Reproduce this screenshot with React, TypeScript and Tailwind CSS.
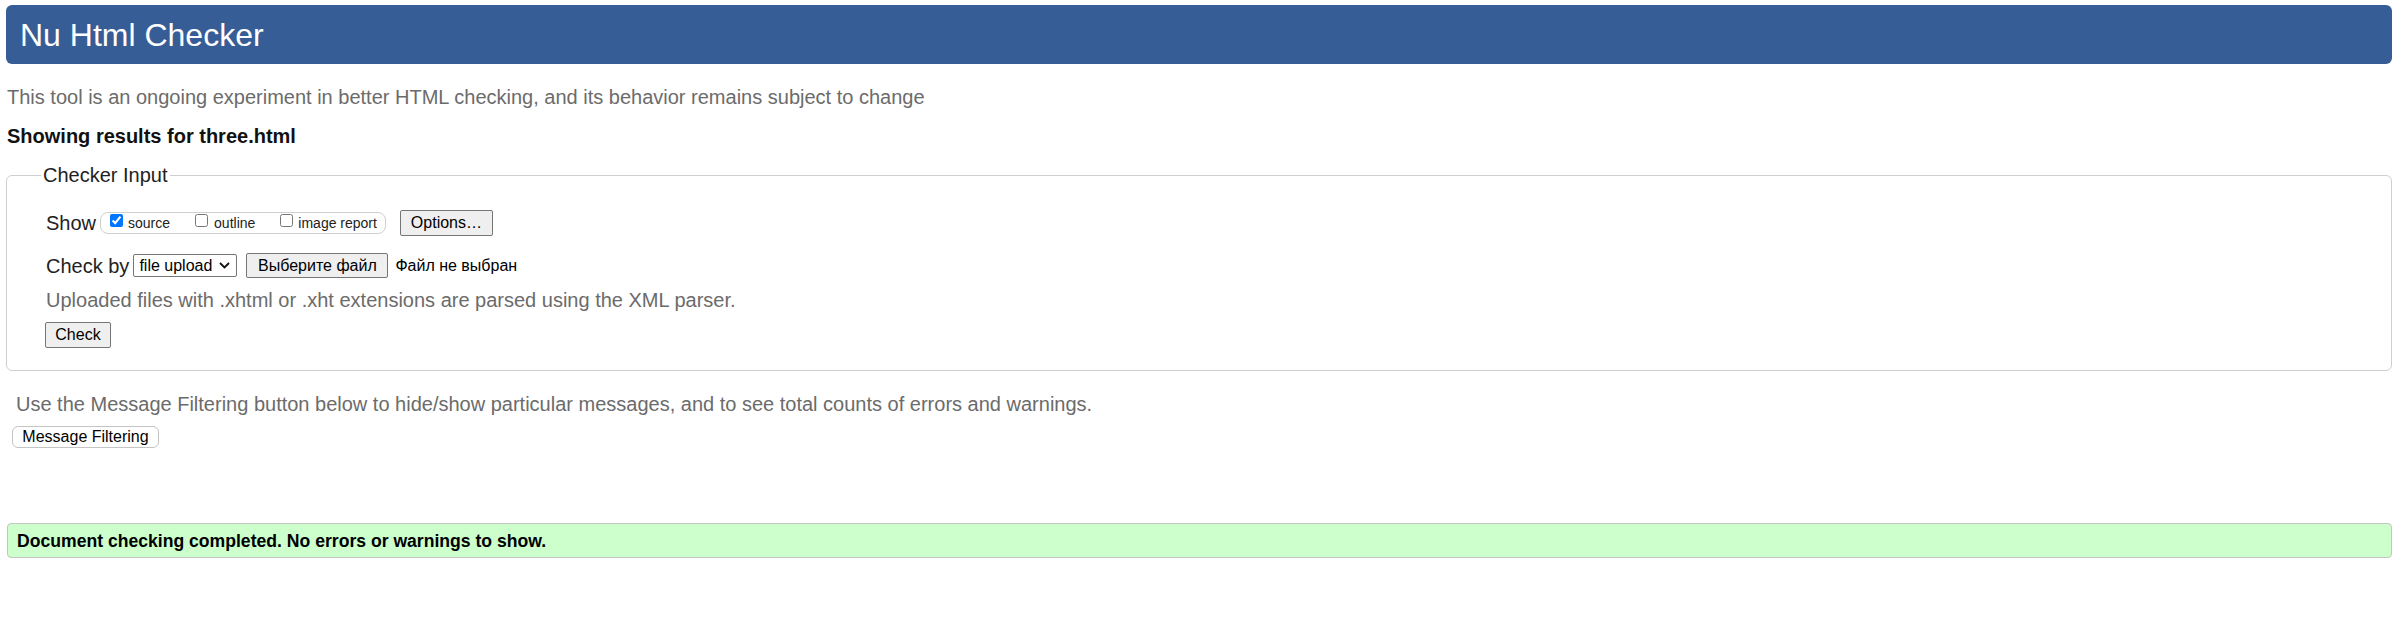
export default function App() {
  return (
    <div className="min-h-screen bg-white pl-[6px] pr-[10px] pt-[5px] font-['Liberation_Sans',Arial,sans-serif] text-[#222]">
      {/* Title bar */}
      <div className="flex h-[59px] items-center rounded-[6px] bg-[#365d96] pl-[14px] text-[32px] leading-[36px] text-white">
        Nu Html Checker
      </div>

      <p className="mt-[21px] pl-[1px] text-[20px] leading-[24px] text-[#6b6b6b]">
        This tool is an ongoing experiment in better HTML checking, and its behavior remains subject to change
      </p>

      <p className="mt-[15px] pl-[1px] text-[20px] font-bold leading-[24px] text-[#111]">
        Showing results for three.html
      </p>

      {/* Checker input */}
      <fieldset className="mt-[15px] rounded-[6px] border border-[#cfcfcf] pl-[34px] pb-[22px]">
        <legend className="px-[2px] text-[20px] leading-[24px] text-[#222]">Checker Input</legend>
        <div className="pl-[5px] pt-[23px]">
          <div className="flex h-[26px] items-center">
            <span className="text-[20px] leading-[24px]">Show</span>
            <div className="ml-[4px] flex h-[22px] items-center rounded-[8px] border border-[#cfcfcf] pl-[9px] pr-[8px]">
              <label className="flex items-center">
                <input type="checkbox" defaultChecked className="mb-[6px] h-[13px] w-[13px]" />
                <span className="ml-[5px] text-[14px] leading-[16px] text-[#222]">source</span>
              </label>
              <label className="ml-[25px] flex items-center">
                <input type="checkbox" className="mb-[6px] h-[13px] w-[13px]" />
                <span className="ml-[6px] text-[14px] leading-[16px] text-[#222]">outline</span>
              </label>
              <label className="ml-[25px] flex items-center">
                <input type="checkbox" className="mb-[6px] h-[13px] w-[13px]" />
                <span className="ml-[5px] text-[14px] leading-[16px] text-[#222]">image report</span>
              </label>
            </div>
            <button className="ml-[14px] flex h-[26px] w-[93px] items-center justify-center rounded-[2px] border border-[#767676] bg-[#efefef] text-[16px] leading-[18px] text-black">
              Options…
            </button>
          </div>

          <div className="mt-[17px] flex h-[25px] items-center">
            <span className="text-[20px] leading-[24px]">Check by</span>
            <div className="ml-[4px] flex h-[23px] w-[104px] items-center rounded-[2px] border border-[#767676] bg-white pl-[5px] pr-[6px] text-[16px] leading-[18px] text-black">
              <span>file upload</span>
              <svg className="ml-auto" width="11" height="7" viewBox="0 0 11 7" fill="none">
                <path d="M1 1l4.5 4.5L10 1" stroke="#111" strokeWidth="1.8" />
              </svg>
            </div>
            <button className="ml-[9px] flex h-[25px] w-[142px] items-center justify-center rounded-[2px] border border-[#767676] bg-[#efefef] text-[16px] leading-[18px] text-black">
              Выберите файл
            </button>
            <span className="ml-[7px] text-[16px] leading-[18px] text-black">Файл не выбран</span>
          </div>

          <p className="mt-[10px] text-[20px] leading-[24px] text-[#6b6b6b]">
            Uploaded files with .xhtml or .xht extensions are parsed using the XML parser.
          </p>

          <button className="-ml-[1px] mt-[10px] flex h-[26px] w-[66px] items-center justify-center rounded-[2px] border border-[#767676] bg-[#efefef] text-[16px] leading-[18px] text-black">
            Check
          </button>
        </div>
      </fieldset>

      <p className="mt-[21px] pl-[10px] text-[20px] leading-[24px] text-[#6b6b6b]">
        Use the Message Filtering button below to hide/show particular messages, and to see total counts of errors and warnings.
      </p>

      <button className="ml-[6px] mt-[10px] flex h-[22px] w-[147px] items-center justify-center rounded-[6px] border border-[#c4c4c4] bg-white text-[16px] leading-[18px] text-black">
        Message Filtering
      </button>

      {/* Result */}
      <div className="ml-[1px] mt-[75px] flex h-[35px] items-center rounded-[4px] border border-[#c4c4c4] bg-[#ccffcc] pl-[9px] text-[17.6px] font-bold leading-[20px] text-black">
        Document checking completed. No errors or warnings to show.
      </div>
    </div>
  );
}
